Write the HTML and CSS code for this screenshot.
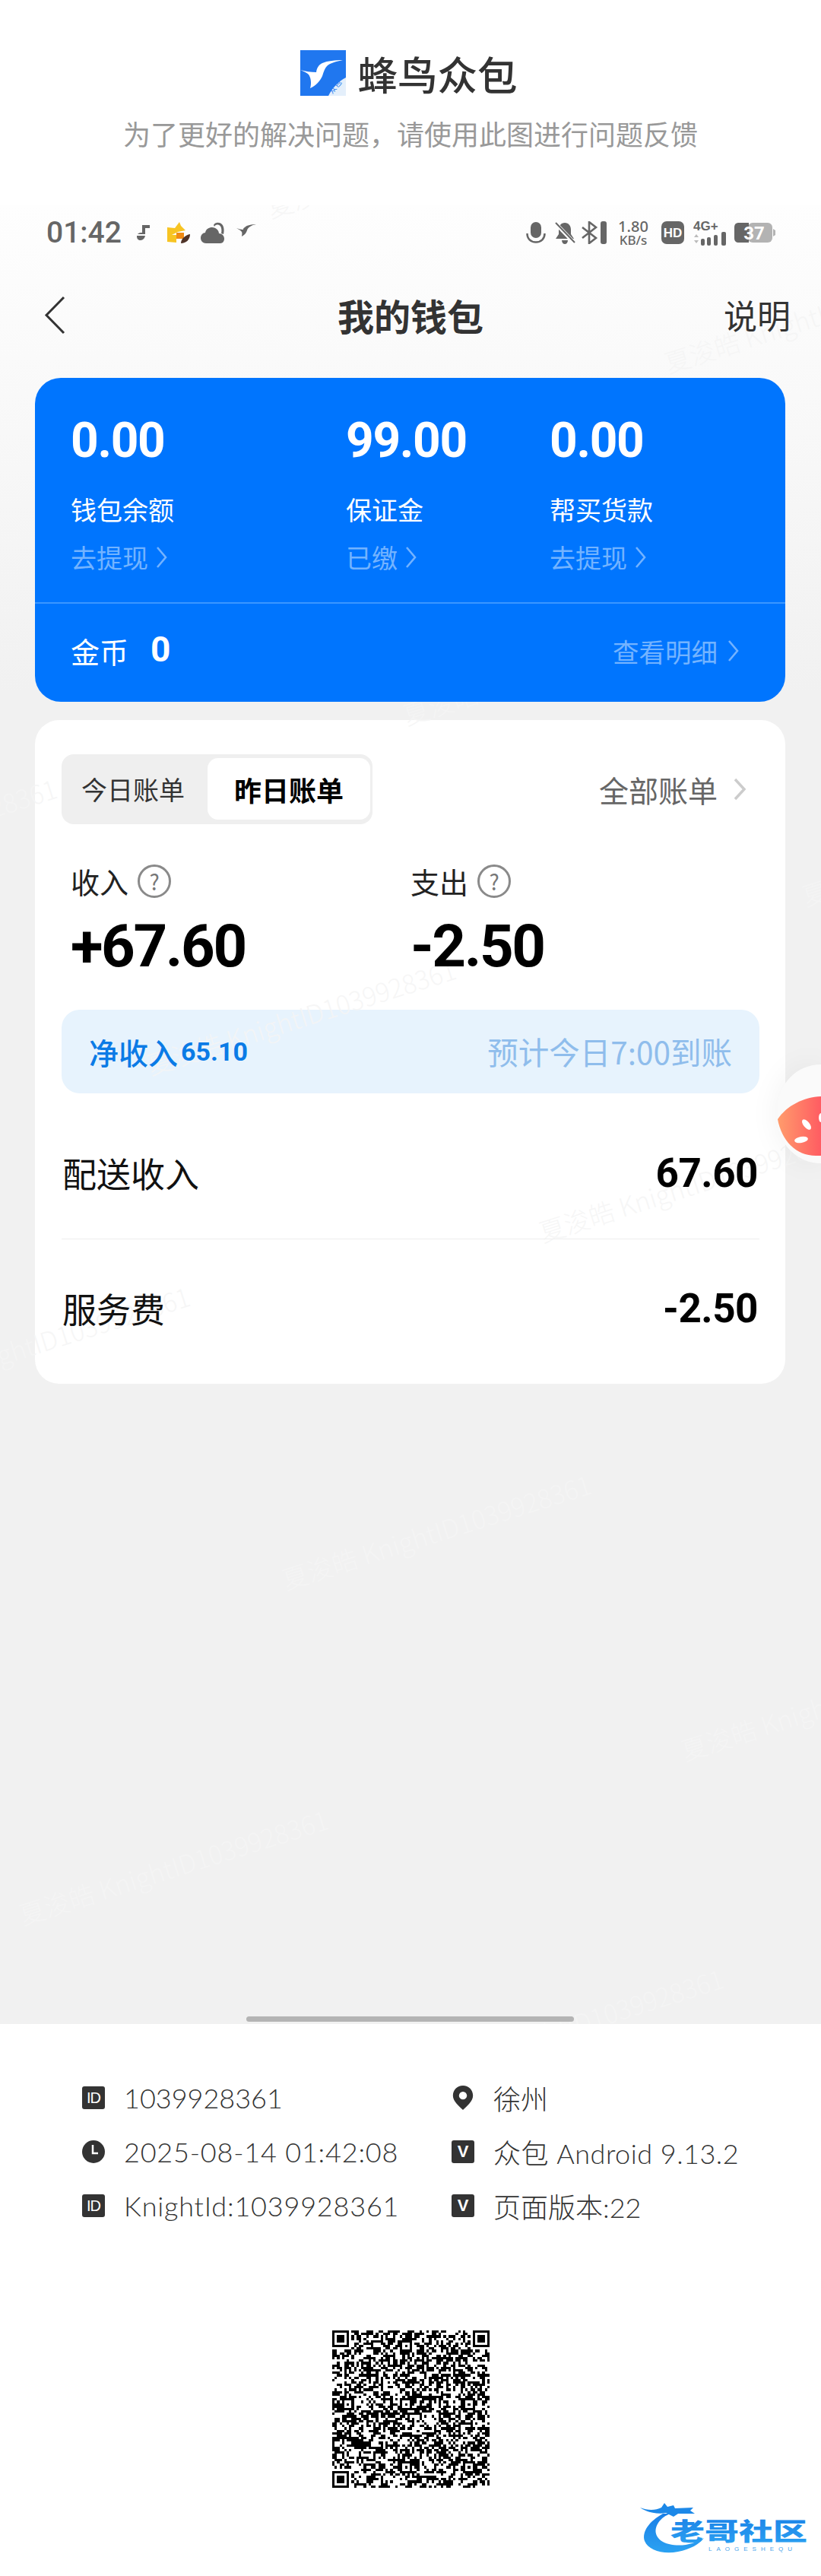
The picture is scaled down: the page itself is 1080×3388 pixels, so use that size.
FILE: index.html
```html
<!DOCTYPE html>
<html lang="zh-CN">
<head>
<meta charset="utf-8">
<title>蜂鸟众包</title>
<link rel="stylesheet" href="styles.css">
</head>
<body>
<header class="banner">
  <div class="brand">
    <svg class="brand-logo" viewBox="0 0 60 60">
      <rect width="60" height="60" fill="#2077ef"/>
      <path d="M60 36C50 41 42 50 37 60H60Z" fill="#e4effb"/>
      <path d="M56 13C46 13 36 14 29 17C25 19 22 22 21 29C14 29 7 28 0 26C5 28 9 30 11 32C14 36 15 44 13 50C20 47 26 41 29 34C31 28 32 24 35 21C39 17 47 15 56 13Z" fill="#fff"/>
      <text x="42" y="58" class="brand-mark" transform="rotate(-50 42 58)">众包</text>
    </svg>
    <span class="brand-name">蜂鸟众包</span>
  </div>
  <p class="banner-tip">为了更好的解决问题，请使用此图进行问题反馈</p>
</header>

<main class="screen">
  <div class="watermarks">
    <span class="wm wm1">夏浚皓 KnightID1039928361</span>
    <span class="wm wm2">夏浚皓 KnightID1039928361</span>
    <span class="wm wm3">夏浚皓 KnightID1039928361</span>
    <span class="wm wm4">夏浚皓 KnightID1039928361</span>
    <span class="wm wm5">夏浚皓 KnightID1039928361</span>
    <span class="wm wm6">夏浚皓 KnightID1039928361</span>
    <span class="wm wm7">夏浚皓 KnightID1039928361</span>
    <span class="wm wm8">夏浚皓 KnightID1039928361</span>
    <span class="wm wm9">夏浚皓 KnightID1039928361</span>
    <span class="wm wm10">夏浚皓 KnightID1039928361</span>
    <span class="wm wm11">夏浚皓 KnightID1039928361</span>
    <span class="wm wm12">夏浚皓 KnightID1039928361</span>
    <span class="wm wm13">夏浚皓 KnightID1039928361</span>
  </div>

  <div class="status">
    <div class="status-left">
      <span class="clock">01:42</span>
      <svg class="si-music" viewBox="0 0 17 20"><path d="M7 0H17V4H11V13C11 17 8 20 5 20C2 20 0 18 0 15C0 12 2 10 7 10Z" fill="#666"/><rect y="12" width="17" height="2" fill="#fff"/></svg>
      <svg class="si-fox" viewBox="0 0 32 28"><path d="M2 7L12 8L18 0L20 5L26 11L16 13L8 17H14V27L2 26Z" fill="#f7c423"/><rect x="14" y="14" width="10" height="8" fill="#ef8a14"/><path d="M20 28C20 22 26 17 32 16C32 23 27 28 20 28Z" fill="#4f3328"/></svg>
      <svg class="si-cloud" viewBox="0 0 31 28"><path d="M7 28C3 28 0 25 0 21C0 17 3 14 6 14C7 9 11 7 15 7C20 7 24 11 24 15C28 15 31 18 31 22C31 25 29 28 26 28Z" fill="#666"/><path d="M17 4C19 0 25 0 28 3C31 6 31 12 30 16L27 15C28 10 27 5 24 4C21 3 19 4 18 6Z" fill="#666"/></svg>
      <svg class="si-bird" viewBox="0 0 26 16"><path d="M26 0C20 0 14 1 11 4C9 5 9 6 9 7C6 7 3 6 0 5C3 7 6 8 7 10C8 12 7 14 7 16C11 14 13 11 14 8C15 4 20 1 26 0Z" fill="#666"/></svg>
    </div>
    <div class="status-right">
      <svg class="si-mic" viewBox="0 0 26 29"><rect x="6" width="14" height="21" rx="7" fill="#666"/><path d="M1.500 15C1.500 22 6 26.500 13 26.500C20 26.500 24.500 22 24.500 15" fill="none" stroke="#666" stroke-width="2.500"/></svg>
      <svg class="si-bell" viewBox="0 0 27 29"><path d="M13 1C8 1 5 5 5 10V16L1 22H25L21 16V10C21 5 18 1 13 1Z" fill="#666"/><path d="M9 24H17C17 27 15 29 13 29C11 29 9 27 9 24Z" fill="#666"/><path d="M0 1L26 28" stroke="#fff" stroke-width="5"/><path d="M1 1L26 27" stroke="#666" stroke-width="2"/></svg>
      <svg class="si-bt" viewBox="0 0 33 30"><path d="M1 8L19 22L10 29V1L19 8L1 22" fill="none" stroke="#666" stroke-width="2.600"/><rect x="25" width="8" height="30" rx="3" fill="#666"/></svg>
      <span class="speed"><b>1.80</b><b class="speed-unit">KB/s</b></span>
      <svg class="si-hd" viewBox="0 0 30 30"><rect width="30" height="30" rx="7" fill="#666"/><text x="15" y="21" class="si-hd-text">HD</text></svg>
      <svg class="si-net" viewBox="0 0 44 36"><text x="0" y="15" class="si-net-text">4G+</text><path d="M4 20L7 24H1ZM4 32L7 28H1Z" fill="#bbb"/><rect x="10" y="26" width="5" height="9" rx="2" fill="#666"/><rect x="18" y="24" width="5" height="11" rx="2" fill="#666"/><rect x="27" y="21" width="5" height="14" rx="2" fill="#666"/><rect x="37" y="17" width="6" height="18" rx="2" fill="#666"/></svg>
      <svg class="si-batt" viewBox="0 0 54 26"><rect x="18" width="32" height="26" rx="6" fill="#b3b3b3"/><path d="M51 8L54 10V16L51 18Z" fill="#b3b3b3"/><path d="M6 0H19V26H6C2 26 0 24 0 20V6C0 2 2 0 6 0Z" fill="#666"/><text x="26" y="22" class="si-batt-text">37</text></svg>
    </div>
  </div>

  <nav class="nav">
    <svg class="nav-back" viewBox="0 0 28 51"><path d="M26 2L3 25.500L26 49" fill="none" stroke="#333" stroke-width="3"/></svg>
    <h1 class="nav-title">我的钱包</h1>
    <span class="nav-help">说明</span>
  </nav>

  <section class="wallet">
    <div class="wallet-grid">
      <div class="wallet-col">
        <div class="wallet-value">0.00</div>
        <div class="wallet-label">钱包余额</div>
        <div class="wallet-link">去提现<svg class="chev" viewBox="0 0 16 30"><path d="M3 2L14 15L3 28"/></svg></div>
      </div>
      <div class="wallet-col">
        <div class="wallet-value">99.00</div>
        <div class="wallet-label">保证金</div>
        <div class="wallet-link">已缴<svg class="chev" viewBox="0 0 16 30"><path d="M3 2L14 15L3 28"/></svg></div>
      </div>
      <div class="wallet-col">
        <div class="wallet-value">0.00</div>
        <div class="wallet-label">帮买货款</div>
        <div class="wallet-link">去提现<svg class="chev" viewBox="0 0 16 30"><path d="M3 2L14 15L3 28"/></svg></div>
      </div>
    </div>
    <div class="wallet-foot">
      <div class="coins"><span class="coins-label">金币</span><span class="coins-value">0</span></div>
      <div class="wallet-link">查看明细<svg class="chev" viewBox="0 0 16 30"><path d="M3 2L14 15L3 28"/></svg></div>
    </div>
  </section>

  <section class="bills">
    <div class="bills-head">
      <div class="tabs">
        <span class="tab">今日账单</span>
        <span class="tab tab-active">昨日账单</span>
      </div>
      <div class="bills-all">全部账单<svg class="chev chev-grey" viewBox="0 0 18 30"><path d="M3 2L15 15L3 28"/></svg></div>
    </div>
    <div class="stats">
      <div class="stat">
        <div class="stat-label">收入<span class="q">?</span></div>
        <div class="stat-value">+67.60</div>
      </div>
      <div class="stat">
        <div class="stat-label">支出<span class="q">?</span></div>
        <div class="stat-value">-2.50</div>
      </div>
    </div>
    <div class="net">
      <div class="net-left"><span class="net-label">净收入</span><span class="net-value">65.10</span></div>
      <div class="net-right">预计今日7:00到账</div>
    </div>
    <div class="row row-first"><span class="row-label">配送收入</span><span class="row-value">67.60</span></div>
    <div class="row"><span class="row-label">服务费</span><span class="row-value">-2.50</span></div>
  </section>

  <div class="melon">
    <svg class="melon-art" viewBox="0 0 57 78">
      <defs><linearGradient id="melonFill" x1="0" x2="1" y1="0" y2="0"><stop offset="0" stop-color="#ff9c6c"/><stop offset="1" stop-color="#ff5c62"/></linearGradient></defs>
      <path d="M0 30C12 12 34 1 57 0V78H50C24 78 5 58 0 30Z" fill="url(#melonFill)"/>
      <ellipse cx="38" cy="37" rx="8" ry="4" transform="rotate(50 38 37)" fill="#fff"/>
      <ellipse cx="31" cy="57" rx="9" ry="4" transform="rotate(-10 31 57)" fill="#fff"/>
      <ellipse cx="57" cy="28" rx="3" ry="6" fill="#fff"/>
    </svg>
  </div>

  <div class="scrollbar"></div>
</main>

<footer class="foot">
  <div class="info">
    <div class="info-item"><span class="badge">ID</span><span>1039928361</span></div>
    <div class="info-item">
      <svg class="info-icon" viewBox="0 0 30 34"><path d="M15 0C7 0 1 6 1 14C1 22 10 29 15 34C20 29 29 22 29 14C29 6 23 0 15 0Z" fill="#333"/><circle cx="15" cy="14" r="5.500" fill="#fff"/></svg>
      <span>徐州</span>
    </div>
    <div class="info-item">
      <svg class="info-icon" viewBox="0 0 30 30"><circle cx="15" cy="15" r="15" fill="#333"/><path d="M14 6V17H21" fill="none" stroke="#fff" stroke-width="2.500"/></svg>
      <span class="info-wide">2025-08-14 01:42:08</span>
    </div>
    <div class="info-item"><span class="badge badge-v">V</span><span class="info-mid">众包 Android 9.13.2</span></div>
    <div class="info-item"><span class="badge">ID</span><span class="info-wide">KnightId:1039928361</span></div>
    <div class="info-item"><span class="badge badge-v">V</span><span>页面版本:22</span></div>
  </div>
  <svg class="qr" id="qr" viewBox="0 0 65 65" shape-rendering="crispEdges"></svg>
  <div class="stamp">
    <svg class="stamp-art" viewBox="0 0 220 68">
      <defs><linearGradient id="stampFill" x1="0" x2="0" y1="0" y2="1"><stop offset="0" stop-color="#1b7fe6"/><stop offset="1" stop-color="#2ba2f2"/></linearGradient></defs>
      <path d="M30 14C12 24 2 38 6 50C11 62 30 68 50 64C66 61 78 54 84 46C72 54 54 58 38 54C22 50 16 38 24 26C28 20 34 16 40 14Z" fill="url(#stampFill)"/>
      <path d="M0 6C10 10 20 10 28 6L32 0L36 5L44 3L46 7L70 6L66 10L72 14L50 14L44 18L34 13C24 15 10 13 0 6Z" fill="#1c88e8"/>
      <text x="40" y="49" class="stamp-title" textLength="180" lengthAdjust="spacingAndGlyphs">老哥社区</text>
      <text x="90" y="63" class="stamp-sub" textLength="110">LAOGESHEQU</text>
    </svg>
  </div>
</footer>
<script src="qr.js"></script>
</body>
</html>
```
FILE: styles.css
```css
* { box-sizing: border-box; }
html, body { margin: 0; padding: 0; }
body {
  width: 1080px;
  height: 3388px;
  position: relative;
  overflow: hidden;
  background: #fff;
  color: #333;
  font-family: "Noto Sans CJK SC", "Noto Sans", sans-serif;
}
p, h1 { margin: 0; }

/* Banner */
.banner { height: 270px; padding-top: 66px; background: #fff; }
.brand { display: flex; justify-content: center; align-items: center; gap: 15px; height: 60px; padding-right: 4px; }
.brand-logo { width: 60px; height: 60px; }
.brand-mark { font-size: 10px; fill: #2077ef; }
.brand-name { font-size: 52.500px; line-height: 60px; color: #333; font-weight: 500; white-space: nowrap; }
.banner-tip { margin-top: 25px; font-size: 36px; line-height: 48px; color: #999; text-align: center; }

/* Screen */
.screen {
  position: relative;
  height: 2392px;
  overflow: hidden;
  display: flex;
  flex-direction: column;
  background: linear-gradient(180deg, #fefefe 0, #fafafa 200px, #f1f1f1 640px);
}
.watermarks { position: absolute; inset: 0; z-index: 1; pointer-events: none; }
.wm {
  position: absolute;
  font-size: 34px;
  line-height: 40px;
  font-weight: 300;
  white-space: nowrap;
  color: rgba(245, 245, 245, .85);
  transform: rotate(-17.5deg);
  transform-origin: 0 100%;
}
.wm1 { left: 358px; top: -17px; }
.wm2 { left: 881px; top: 187px; }
.wm3 { left: 20px; top: 437px; }
.wm4 { left: 537px; top: 650px; }
.wm5 { left: 1062px; top: 888px; }
.wm6 { left: -325px; top: 872px; }
.wm7 { left: 200px; top: 1110px; }
.wm8 { left: 716px; top: 1330px; }
.wm9 { left: -150px; top: 1540px; }
.wm10 { left: 378px; top: 1787px; }
.wm11 { left: 903px; top: 2012px; }
.wm12 { left: 32px; top: 2228px; }
.wm13 { left: 552px; top: 2437px; }

/* Status bar */
.status { flex: none; height: 60px; margin-top: 6px; padding: 0 60px 0 61px; display: flex; justify-content: space-between; align-items: center; position: relative; z-index: 2; }
.status-left, .status-right { display: flex; align-items: center; }
.clock { font-family: Roboto, sans-serif; font-size: 39px; line-height: 44px; font-weight: 500; color: #666; width: 96px; white-space: nowrap; }
.si-music { width: 17px; height: 20px; margin-left: 23px; }
.si-fox { width: 32px; height: 28px; margin-left: 21px; }
.si-cloud { width: 31px; height: 28px; margin-left: 14px; }
.si-bird { width: 26px; height: 16px; margin-left: 16px; margin-top: -6px; }
.si-mic { width: 26px; height: 29px; }
.si-bell { width: 27px; height: 29px; margin-left: 12px; }
.si-bt { width: 33px; height: 30px; margin-left: 8px; }
.speed { width: 46px; margin-left: 12px; display: flex; flex-direction: column; align-items: center; font-family: "Noto Sans", sans-serif; color: #666; font-size: 20px; line-height: 19px; }
.speed b { font-weight: 500; }
.speed-unit { font-size: 17px; line-height: 18px; white-space: nowrap; }
.si-hd { width: 30px; height: 30px; margin-left: 14px; }
.si-hd-text { font: 700 17px "Liberation Sans", sans-serif; fill: #fff; text-anchor: middle; }
.si-net { width: 44px; height: 36px; margin-left: 12px; }
.si-net-text { font: 700 17px "Liberation Sans", sans-serif; fill: #666; }
.si-batt { width: 54px; height: 26px; margin-left: 10px; }
.si-batt-text { font: 700 24px Roboto, sans-serif; fill: #fff; text-anchor: middle; }

/* Nav */
.nav { flex: none; height: 136px; margin: 10px 0 2px; padding: 0 40px 0 58px; display: flex; justify-content: space-between; align-items: center; position: relative; z-index: 2; }
.nav-back { width: 28px; height: 51px; }
.nav-title { font-size: 48px; line-height: 60px; font-weight: 700; color: #333; position: absolute; left: 0; right: 0; text-align: center; }
.nav-help { font-size: 44px; line-height: 60px; color: #333; }

/* Wallet */
.wallet { flex: none; position: relative; z-index: 2; margin: 13px 47px 0 46px; height: 426px; border-radius: 34px; background: #0075fe; color: #fff; }
.wallet-grid { height: 297px; padding: 40px 0 0 47px; display: grid; grid-template-columns: 362px 268px 1fr; border-bottom: 2px solid #3b97ff; }
.wallet-value { font-family: Roboto, sans-serif; font-size: 64px; line-height: 86px; font-weight: 700; letter-spacing: -1.300px; }
.wallet-label { margin-top: 23px; font-size: 34px; line-height: 48px; }
.wallet-link { margin-top: 15px; display: flex; align-items: center; gap: 9px; font-size: 34px; line-height: 48px; color: #73b3ff; }
.chev { width: 16px; height: 30px; fill: none; stroke: currentColor; stroke-width: 2.600; }
.chev-grey { width: 18px; height: 30px; margin-left: 20px; color: #ccc; stroke-width: 3.500; }
.wallet-foot { height: 129px; padding: 0 61px 5px 47px; display: flex; justify-content: space-between; align-items: center; }
.wallet-foot .wallet-link { margin-top: 0; gap: 12px; font-size: 34.500px; }
.coins { display: flex; align-items: center; gap: 29px; }
.coins-label { font-size: 38px; line-height: 48px; }
.coins-value { font-family: Roboto, sans-serif; font-size: 46px; line-height: 48px; font-weight: 700; margin-top: -4px; }

/* Bills */
.bills { flex: none; margin: 24px 47px 0 46px; padding: 45px 34px 7px 35px; height: 873px; border-radius: 32px; background: #fff; }
.bills-head { display: flex; justify-content: space-between; align-items: center; position: relative; z-index: 2; }
.tabs { height: 92px; padding: 5px 3px 6px 26px; display: flex; align-items: center; gap: 30px; background: #efefef; border-radius: 16px; }
.tab { font-size: 34px; line-height: 48px; color: #333; }
.tab-active { align-self: stretch; padding: 0 35px; display: flex; align-items: center; font-size: 36px; font-weight: 700; color: #000; background: #fff; border-radius: 14px; }
.bills-all { display: flex; align-items: center; padding-right: 17px; font-size: 39px; line-height: 48px; color: #666; white-space: nowrap; }
.stats { margin-top: 48px; padding-left: 12px; display: grid; grid-template-columns: 447px 1fr; position: relative; z-index: 2; }
.stat-label { display: flex; align-items: center; gap: 12px; font-size: 38px; line-height: 54px; color: #222; }
.q { width: 44px; height: 44px; border: 3px solid #8a8a8a; border-radius: 50%; display: flex; justify-content: center; align-items: center; font-size: 28px; line-height: 36px; color: #777; }
.stat-value { margin-top: 14px; font-family: Roboto, sans-serif; font-size: 78px; line-height: 90px; font-weight: 700; letter-spacing: -2.400px; color: #000; }
.net { margin-top: 38px; height: 110px; padding: 0 36px; display: flex; justify-content: space-between; align-items: center; border-radius: 24px; background: #e7f3fd; }
.net-left { display: flex; align-items: center; gap: 4px; color: #0b7be6; position: relative; z-index: 2; }
.net-label { font-size: 39px; line-height: 50px; font-weight: 500; }
.net-value { font-family: Roboto, sans-serif; font-size: 34px; line-height: 50px; font-weight: 700; }
.net-right { font-size: 40.500px; line-height: 50px; color: #8fbdec; font-weight: 400; white-space: nowrap; position: relative; z-index: 2; }
.row { height: 182px; padding: 0 2px 0 1px; display: flex; justify-content: space-between; align-items: center; position: relative; z-index: 2; }
.row-first { height: 192px; padding-top: 18px; border-bottom: 1px solid #eee; }
.row-label { font-size: 45px; line-height: 60px; color: #111; }
.row-value { font-family: Roboto, sans-serif; font-size: 53px; line-height: 60px; font-weight: 700; color: #000; letter-spacing: -.500px; }

/* Floating button */
.melon { position: absolute; z-index: 3; right: 0; top: 1130px; width: 57px; height: 130px; padding-top: 42px; background: #fafafa; border-radius: 70px 0 0 70px; box-shadow: 0 0 40px rgba(0, 0, 0, .06); }
.melon-art { display: block; width: 57px; height: 78px; }

/* Scroll indicator */
.scrollbar { flex: none; position: relative; z-index: 2; width: 431px; height: 7px; margin: auto auto 3px 324px; border-radius: 4px; background: #b4b4b4; }

/* Footer */
.foot { height: 726px; padding-top: 61px; background: #fff; }
.info { padding-left: 108px; display: grid; grid-template-columns: 486px 1fr; grid-auto-rows: 71px; }
.info-item { display: flex; align-items: center; gap: 25px; font-family: Lato, "Noto Sans CJK SC", sans-serif; font-size: 36px; font-weight: 300; color: #333; white-space: nowrap; }
.info-wide { letter-spacing: .8px; }
.info-mid { letter-spacing: .5px; }
.info-icon { width: 30px; height: 32px; flex: none; }
.badge { width: 30px; height: 30px; flex: none; display: flex; justify-content: center; align-items: center; border-radius: 3px; background: #333; color: #fff; font-family: "Liberation Sans", sans-serif; font-size: 20px; font-weight: 400; line-height: 30px; letter-spacing: -1px; }
.badge-v { font-weight: 700; font-size: 22px; letter-spacing: 0; }
.qr { display: block; width: 207px; height: 207px; margin: 129px auto 0; }
.stamp { position: absolute; left: 842px; top: 3292px; width: 220px; height: 68px; }
.stamp-art { display: block; width: 220px; height: 68px; }
.stamp-title { font-size: 32px; font-weight: 900; fill: url(#stampFill); }
.stamp-sub { font: 400 8px "Liberation Sans", sans-serif; fill: #4aa4ea; }
```
FILE: qr.js
```js
(function () {
  var n = 65, seed = 20250814, cells = [], x, y;
  function rnd() {
    seed = (seed * 1664525 + 1013904223) >>> 0;
    return (seed >>> 16) / 65536;
  }
  for (y = 0; y < n; y++) {
    cells.push([]);
    for (x = 0; x < n; x++) {
      cells[y].push(rnd() < 0.52 ? 1 : 0);
    }
  }
  function clear(cx, cy, w, h) {
    for (var j = cy; j < cy + h; j++) {
      for (var i = cx; i < cx + w; i++) {
        if (j >= 0 && j < n && i >= 0 && i < n) { cells[j][i] = 0; }
      }
    }
  }
  function ring(cx, cy, size) {
    for (var j = 0; j < size; j++) {
      for (var i = 0; i < size; i++) {
        var edge = i === 0 || j === 0 || i === size - 1 || j === size - 1;
        var mid = size === 7 ? (i > 1 && i < 5 && j > 1 && j < 5) : (i === 2 && j === 2);
        cells[cy + j][cx + i] = edge || mid ? 1 : 0;
      }
    }
  }
  clear(0, 0, 8, 8); clear(n - 8, 0, 8, 8); clear(0, n - 8, 8, 8);
  ring(0, 0, 7); ring(n - 7, 0, 7); ring(0, n - 7, 7);
  [6, 30, 56].forEach(function (a) {
    [6, 30, 56].forEach(function (b) {
      if (!(a === 6 && b === 6) && !(a === 56 && b === 6) && !(a === 6 && b === 56)) {
        ring(a - 2, b - 2, 5);
      }
    });
  });
  var d = "";
  for (y = 0; y < n; y++) {
    for (x = 0; x < n; x++) {
      if (cells[y][x]) { d += "M" + x + " " + y + "h1v1h-1z"; }
    }
  }
  var path = document.createElementNS("http://www.w3.org/2000/svg", "path");
  path.setAttribute("d", d);
  path.setAttribute("fill", "#000");
  document.getElementById("qr").appendChild(path);
})();
```
